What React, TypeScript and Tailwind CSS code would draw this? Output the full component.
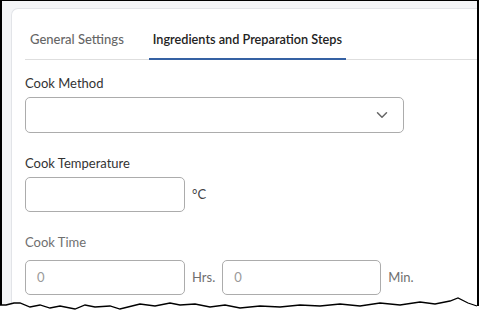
import { ChevronDown } from 'lucide-react';

const TEAR: [number, number][] = [
  [0, 10], [6, 10], [14, 8], [20, 8], [30, 12], [40, 10], [50, 13], [60, 11], [75, 14], [85, 10],
  [95, 12], [110, 11], [120, 14], [140, 9], [155, 11], [170, 8], [180, 10], [195, 9], [210, 12],
  [225, 10], [240, 13], [260, 11], [280, 12], [300, 10], [320, 11], [340, 9], [360, 11], [380, 8],
  [400, 10], [420, 7], [435, 9], [450, 6], [458, 3], [468, 8], [477, 11],
];

function TornEdge() {
  const line = TEAR.map(([x, y], i) => `${i === 0 ? 'M' : 'L'}${x},${y}`).join(' ');
  return (
    <svg className="absolute left-0 top-[295px]" width="479" height="20" viewBox="0 0 479 20">
      <path d={`${line} L479,11 L479,20 L0,20 Z`} fill="#ffffff" />
      <path d={line} fill="none" stroke="#000" strokeWidth={1.3} />
    </svg>
  );
}

function Label({ children, muted }: { children: React.ReactNode; muted?: boolean }) {
  return (
    <div className={`text-[13px] leading-4 ${muted ? 'text-[#6f6f6f]' : 'text-[#333]'}`}>{children}</div>
  );
}

export default function App() {
  return (
    <div
      className="relative w-[479px] h-[315px] overflow-hidden bg-white"
      style={{ fontFamily: 'Lato, "Open Sans", sans-serif' }}
    >
      <div className="h-[306px] border-t border-l-2 border-r-2 border-black bg-[#f4f5f7] pl-[9px] pt-[7px]">
        <div className="h-full bg-white border-l border-t border-[#e2e4e8] rounded-tl-[7px] pl-[13px]">
          {/* Tabs */}
          <div className="flex gap-5 pt-[22px] border-b border-[#dedede]">
            <div className="px-[5px] pb-[11px] text-[13px] leading-4 font-medium text-[#666] border-b-2 border-transparent -mb-px">
              General Settings
            </div>
            <div className="px-[4px] pb-[11px] text-[12.7px] leading-4 font-semibold text-[#222] border-b-2 border-[#3561a3] -mb-px">
              Ingredients and Preparation Steps
            </div>
          </div>

          <div className="pt-[15px]">
            <Label>Cook Method</Label>
            <div className="mt-[6px] w-[379px] h-[36px] rounded-[5px] border border-[#acacac] flex items-center justify-end pr-[12px]">
              <ChevronDown className="w-[18px] h-[18px] text-[#666]" strokeWidth={2} />
            </div>

            <div className="mt-[22px]">
              <Label>Cook Temperature</Label>
            </div>
            <div className="mt-[6px] flex items-center gap-[7px]">
              <div className="w-[160px] h-[35px] rounded-[5px] border border-[#acacac]" />
              <span className="text-[13px] text-[#444]">°C</span>
            </div>

            <div className="mt-[22px]">
              <Label muted>Cook Time</Label>
            </div>
            <div className="mt-[10px] flex items-center">
              <div className="w-[160px] h-[35px] rounded-[5px] border border-[#acacac] flex items-center pl-[11px] text-[13px] text-[#9a9a9a]">
                0
              </div>
              <span className="ml-[7px] text-[13px] text-[#6f6f6f]">Hrs.</span>
              <div className="ml-[7px] w-[159px] h-[35px] rounded-[5px] border border-[#acacac] flex items-center pl-[11px] text-[13px] text-[#9a9a9a]">
                0
              </div>
              <span className="ml-[7px] text-[13px] text-[#6f6f6f]">Min.</span>
            </div>
          </div>
        </div>
      </div>
      <TornEdge />
    </div>
  );
}
